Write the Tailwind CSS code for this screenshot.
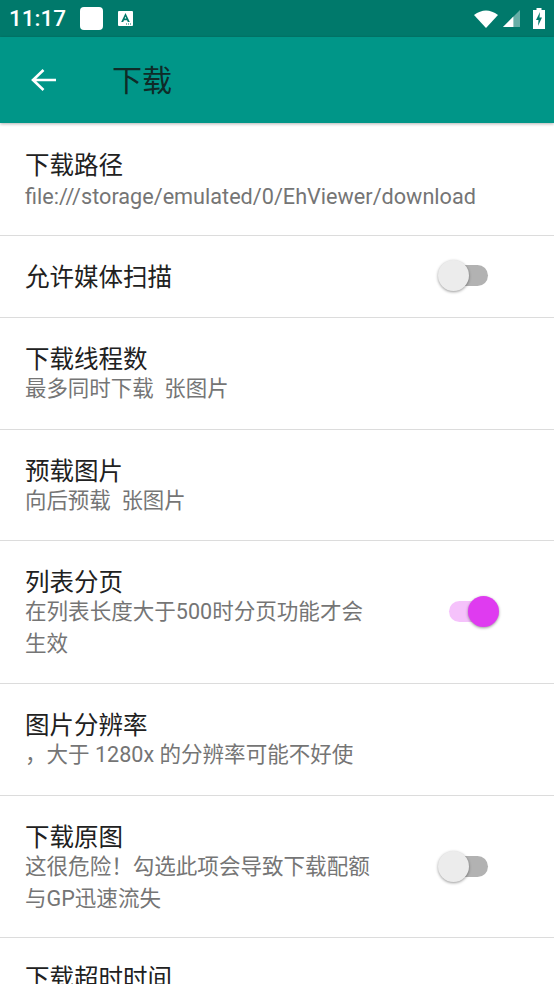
<!DOCTYPE html>
<html><head><meta charset="utf-8"><script src="https://cdn.jsdelivr.net/npm/@tailwindcss/browser@4"></script></head>
<body class="m-0">
<div class="w-[554px] h-[984px] overflow-hidden bg-white flex flex-col font-['Roboto','Noto_Sans_CJK_SC',sans-serif]">
  <div class="h-[37px] shrink-0 bg-[#00796b] flex items-center pl-[9px] pr-[9px] text-white">
    <span class="text-[22.5px] font-medium w-[71px] leading-none">11:17</span>
    <div class="w-[23px] h-[23px] rounded-[4px] bg-white"></div>
    <svg class="ml-[15px]" width="15" height="15" viewBox="0 0 15 15"><rect width="15" height="15" rx="1" fill="#fff"/><path d="M7.5 2 L3.2 11 H5.2 L6 9.2 H9 L9.8 11 H11.8 Z M6.7 7.6 L7.5 5.6 L8.3 7.6 Z" fill="#00796b" fill-rule="evenodd"/><path d="M8 13h1M10 13h1M12 13h1" stroke="#00796b" stroke-width="1"/></svg>
    <div class="flex-1"></div>
    <svg width="24" height="18" viewBox="0 0 24 18"><path d="M0 5 Q12 -4 24 5 L12 18 Z" fill="#fff"/></svg>
    <svg class="ml-[5px]" width="17" height="17" viewBox="0 0 18 18"><path d="M0 18 L18 0 V18 Z" fill="#fff" fill-opacity=".4"/><path d="M0 18 L11 7 V18 Z" fill="#fff"/></svg>
    <svg class="ml-[13px]" width="12" height="21" viewBox="0 0 12 21"><path d="M3.5 0h5v2H12v19H0V2h3.5z" fill="#fff"/><path d="M7 4 L3 12 H5.5 L5 18 L9 9.5 H6.5 Z" fill="#00796b"/></svg>
  </div>
  <div class="h-[86px] shrink-0 bg-[#009688] flex items-center shadow-[0_1px_3px_rgba(0,0,0,0.3)] relative">
    <svg class="ml-[31px]" width="25" height="24" viewBox="0 0 25 24" fill="none" stroke="#fff" stroke-width="2.6"><path d="M25 12H2M12.5 2 2 12 12.5 22"/></svg>
    <span class="ml-[56px] mt-[2px] text-[30px] leading-none text-[#0f2b28]">下载</span>
  </div>
  <div class="flex-1 overflow-hidden">
    <div class="h-[113px] pl-[25px] pt-[28px] border-b border-[#dcdcdc]">
      <div class="text-[24.5px] leading-[30px] text-[#212121]">下载路径</div>
      <div class="text-[21.65px] leading-[32px] text-[#757575]">file:///storage/emulated/0/EhViewer/download</div>
    </div>
    <div class="h-[82px] pl-[25px] pr-[66px] flex items-center justify-between border-b border-[#dcdcdc]">
      <div class="text-[24.5px] mt-[4px] text-[#212121]">允许媒体扫描</div>
      <div class="relative w-[36px] h-[21px] -mt-[3px] rounded-full bg-[#b2b2b2]"><div class="absolute left-[-14px] top-[-5px] w-[31px] h-[31px] rounded-full bg-[#ececec] shadow-[0_1px_3px_rgba(0,0,0,0.4)]"></div></div>
    </div>
    <div class="h-[112px] pl-[25px] pt-[27px] border-b border-[#dcdcdc]">
      <div class="text-[24.5px] leading-[30px] -mb-[2px] text-[#212121]">下载线程数</div>
      <div class="text-[21.45px] leading-[32px] text-[#757575] whitespace-pre">最多同时下载  张图片</div>
    </div>
    <div class="h-[111px] pl-[25px] pt-[27px] border-b border-[#dcdcdc]">
      <div class="text-[24.5px] leading-[30px] -mb-[2px] text-[#212121]">预载图片</div>
      <div class="text-[21.45px] leading-[32px] text-[#757575] whitespace-pre">向后预载  张图片</div>
    </div>
    <div class="h-[143px] pl-[25px] pr-[69px] flex items-center justify-between border-b border-[#dcdcdc]">
      <div class="w-[345px] mt-[4px]">
        <div class="text-[24.5px] leading-[30px] -mb-[2px] text-[#212121]">列表分页</div>
        <div class="text-[21.55px] leading-[32px] text-[#757575]">在列表长度大于500时分页功能才会生效</div>
      </div>
      <div class="relative w-[36px] h-[21px] -mt-[2px] rounded-full bg-[#f5c2fb]"><div class="absolute left-[19px] top-[-5px] w-[31px] h-[31px] rounded-full bg-[#df3bf0] shadow-[0_1px_3px_rgba(0,0,0,0.4)]"></div></div>
    </div>
    <div class="h-[112px] pl-[25px] pt-[27px] border-b border-[#dcdcdc]">
      <div class="text-[24.5px] leading-[30px] -mb-[2px] text-[#212121]">图片分辨率</div>
      <div class="text-[21.55px] leading-[32px] text-[#757575]">，大于 1280x 的分辨率可能不好使</div>
    </div>
    <div class="h-[142px] pl-[25px] pr-[66px] flex items-center justify-between border-b border-[#dcdcdc]">
      <div class="w-[350px] mt-[4px]">
        <div class="text-[24.5px] leading-[30px] -mb-[2px] text-[#212121]">下载原图</div>
        <div class="text-[21.55px] leading-[32px] text-[#757575]">这很危险！勾选此项会导致下载配额与GP迅速流失</div>
      </div>
      <div class="relative w-[36px] h-[21px] rounded-full bg-[#b2b2b2]"><div class="absolute left-[-14px] top-[-5px] w-[31px] h-[31px] rounded-full bg-[#ececec] shadow-[0_1px_3px_rgba(0,0,0,0.4)]"></div></div>
    </div>
    <div class="pl-[25px] pt-[26px]">
      <div class="text-[24.5px] leading-[30px] text-[#212121]">下载超时时间</div>
    </div>
  </div>
</div>
</body></html>
